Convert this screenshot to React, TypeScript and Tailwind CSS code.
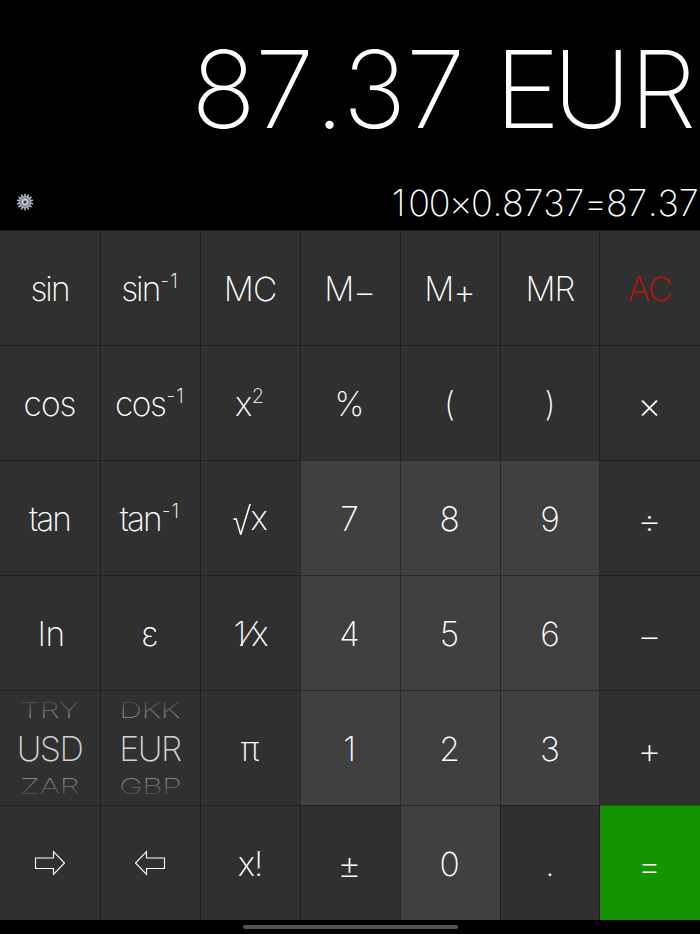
import React from "react";

type KeyDef = { label: React.ReactNode; tone?: "digit" | "equals" | "clear" };

const Word = ({ children }: { children: React.ReactNode }) => (
  <span className="tracking-[-2px]">{children}</span>
);

const Name = ({ children }: { children: React.ReactNode }) => (
  <span className="tracking-[-1px]">{children}</span>
);

const Sup = ({ base, sup, tight = false }: { base: string; sup: string; tight?: boolean }) => (
  <span className="flex">
    <span className={tight ? "tracking-[-2px]" : "tracking-[-1.5px]"}>{base}</span>
    <span className="-mt-[2px] pl-[1px] text-[20px] leading-[28px] tracking-[1px]">{sup}</span>
  </span>
);

const Op = ({ children }: { children: string }) => (
  <span className="pt-[3px] text-[37px]">{children}</span>
);

const Memory = ({ sign }: { sign: string }) => (
  <span className="flex pl-[1px] pt-[1px]">
    <span>M</span>
    <span className="-ml-px pt-[2px] text-[35px]">{sign}</span>
  </span>
);

const Arrow = ({ left = false }: { left?: boolean }) => (
  <svg width="32" height="28" viewBox="0 0 32 28" className={left ? "-scale-x-100" : ""} fill="none" stroke="white" strokeWidth="1.1">
    <path d="M1.5 8H19.5V1.5L30.5 13L19.5 24.500V18.500H1.500Z" />
  </svg>
);

const Picker = ({ items }: { items: [string, string, string] }) => (
  <div className="flex h-full flex-col items-center justify-center pb-[1px]">
    <span className="h-[23px] scale-x-[1.1] scale-y-75 bg-gradient-to-b from-[#484848] to-[#888] bg-clip-text text-[29px] leading-[23px] tracking-[-0.5px] text-transparent">{items[0]}</span>
    <span className="flex h-[53px] items-center pt-[1px] text-[34px] tracking-[-1.5px] text-[#d4d4d4]">{items[1]}</span>
    <span className="h-[23px] scale-x-[1.1] scale-y-75 bg-gradient-to-t from-[#484848] to-[#888] bg-clip-text text-[29px] leading-[23px] tracking-[-0.5px] text-transparent">{items[2]}</span>
  </div>
);

const teeth = Array.from({ length: 14 }, (_, i) => (i * 360) / 14);

const Gear = () => (
  <svg width="18" height="18" viewBox="-9 -9 18 18">
    {teeth.map((a) => (
      <rect key={a} x="-0.8" y="-8.300" width="1.600" height="3" rx="0.300" fill="#b4bdc9" transform={`rotate(${a})`} />
    ))}
    <circle r="6.300" fill="#a3acb9" />
    <circle r="4.300" fill="none" stroke="#7d8794" strokeWidth="1.500" />
    <circle r="2.400" fill="#596373" stroke="#d8dee6" strokeWidth="1.100" />
    <circle r="0.900" fill="#20252c" />
  </svg>
);

const resultGlyphs: [string, string][] = [
  ["8", "w-[61px] pt-[1px]"], ["7", "w-[61px] pt-[1px]"], [".", "w-[29px]"], ["3", "w-[61px] pt-[1px]"], ["7", "w-[61px] pt-[1px]"],
  [" ", "w-[29px]"], ["E", "w-[65px] scale-x-105"], ["U", "w-[64px]"], ["R", "ml-[4px] w-[70px]"],
];

const glyphWidth = (c: string) => (c === "." ? "w-[10.5px]" : c === "×" || c === "=" ? "w-[21.800px]" : "w-[20.500px]");

const keys: KeyDef[] = [
  { label: <Word>sin</Word> }, { label: <Sup base="sin" sup="-1" tight /> }, { label: <Name>MC</Name> }, { label: <Memory sign="−" /> }, { label: <Memory sign="+" /> }, { label: <Name>MR</Name> }, { label: <Name>AC</Name>, tone: "clear" },
  { label: <Name>cos</Name> }, { label: <Sup base="cos" sup="-1" /> }, { label: <Sup base="x" sup="2" /> }, { label: "%" }, { label: "(" }, { label: ")" }, { label: <Op>×</Op> },
  { label: <Word>tan</Word> }, { label: <Sup base="tan" sup="-1" tight /> },
  { label: <span className="flex"><span className="mt-[2px] scale-x-90 scale-y-125">√</span><span className="-ml-[2px]">x</span></span> },
  { label: "7", tone: "digit" }, { label: "8", tone: "digit" }, { label: "9", tone: "digit" }, { label: <Op>÷</Op> },
  { label: <span className="pl-[4px]">ln</span> }, { label: "ε" },
  { label: <span className="flex pl-[2px]"><span>1</span><span>⁄</span><span>x</span></span> },
  { label: "4", tone: "digit" }, { label: "5", tone: "digit" }, { label: "6", tone: "digit" }, { label: <Op>−</Op> },
  { label: <Picker items={["TRY", "USD", "ZAR"]} /> }, { label: <Picker items={["DKK", "EUR", "GBP"]} /> }, { label: "π" },
  { label: "1", tone: "digit" }, { label: "2", tone: "digit" }, { label: "3", tone: "digit" }, { label: <Op>+</Op> },
  { label: <Arrow /> }, { label: <Arrow left /> }, { label: <Name>x!</Name> }, { label: <Op>±</Op> }, { label: "0", tone: "digit" }, { label: "." }, { label: <Op>=</Op>, tone: "equals" },
];

const tones = {
  plain: "bg-[#303030] text-white",
  digit: "bg-[#404040] text-white",
  clear: "bg-[#303030] text-[#c41200]",
  equals: "bg-[#149400] text-white",
};

const edges = ["pr-[1px]", "border-l pr-[1px]", "border-l pr-[1px]", "border-l pr-[2px]", "border-l pr-[2px]", "border-x", "pr-[1px]"];

export default function App() {
  return (
    <main className="flex h-[934px] w-[700px] flex-col overflow-hidden bg-black font-['Inter','Liberation_Sans',sans-serif] font-extralight text-white">
      <header className="flex h-[230px] flex-col">
        <div className="flex h-[174px] items-center justify-end pt-[4px] pr-[2px] text-[107px] leading-none font-[150]">
          {resultGlyphs.map(([c, w], i) => (
            <span key={i} className={`flex shrink-0 justify-center ${w}`}>{c}</span>
          ))}
        </div>
        <div className="flex h-[56px] items-center justify-between pl-[16px]">
          <Gear />
          <div className="flex pt-[2px] pr-[1px] text-[36px] leading-none font-[170]">
            {"100×0.8737=87.37".split("").map((c, i) => (
              <span key={i} className={`flex shrink-0 justify-center ${glyphWidth(c)}`}>{c}</span>
            ))}
          </div>
        </div>
      </header>
      <section className="grid h-[690px] grid-cols-7 grid-rows-6">
        {keys.map((k, i) => (
          <button key={i} className={`flex items-center justify-center border-t border-black/35 pt-[2px] text-[33.500px] leading-[40px] ${edges[i % 7]} ${tones[k.tone ?? "plain"]}`}>
            {k.label}
          </button>
        ))}
      </section>
      <footer className="flex h-[14px] justify-center pt-[5px]">
        <div className="h-[4px] w-[215px] rounded-full bg-[#555]" />
      </footer>
    </main>
  );
}
